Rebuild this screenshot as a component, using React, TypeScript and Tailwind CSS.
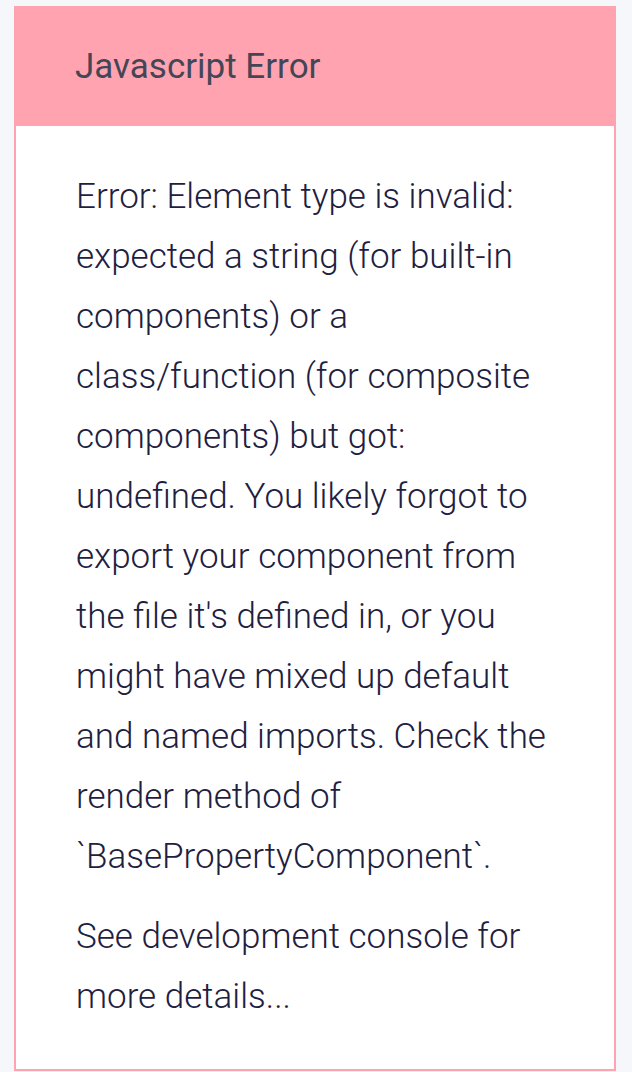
export default function App() {
  return (
    <div className="min-h-[1072px] bg-[#f6f7fb] pl-[14px] pr-[16px] pt-[6px] pb-[3px] font-['Roboto',sans-serif]">
      <div className="border-2 border-[#ffa3b1] bg-white">
        <div className="-m-[2px] mb-0 flex h-[120px] items-center bg-[#ffa3b1] px-[61px] pt-[2px]">
          <h1 className="text-[35px] font-normal text-[#454655]">Javascript Error</h1>
        </div>
        <div className="pl-[60px] pr-[56px] pt-[41px] pb-[42px] text-[35px] leading-[60px] font-light text-[#1e2040]">
          <p>
            Error: Element type is invalid: expected a string (for built-in components) or a
            class/function (for composite components) but got: undefined. You likely forgot to
            export your component from the file it's defined in, or you might have mixed up
            default and named imports. Check the render method of `BasePropertyComponent`.
          </p>
          <p className="mt-[20px]">See development console for more details...</p>
        </div>
      </div>
    </div>
  );
}
